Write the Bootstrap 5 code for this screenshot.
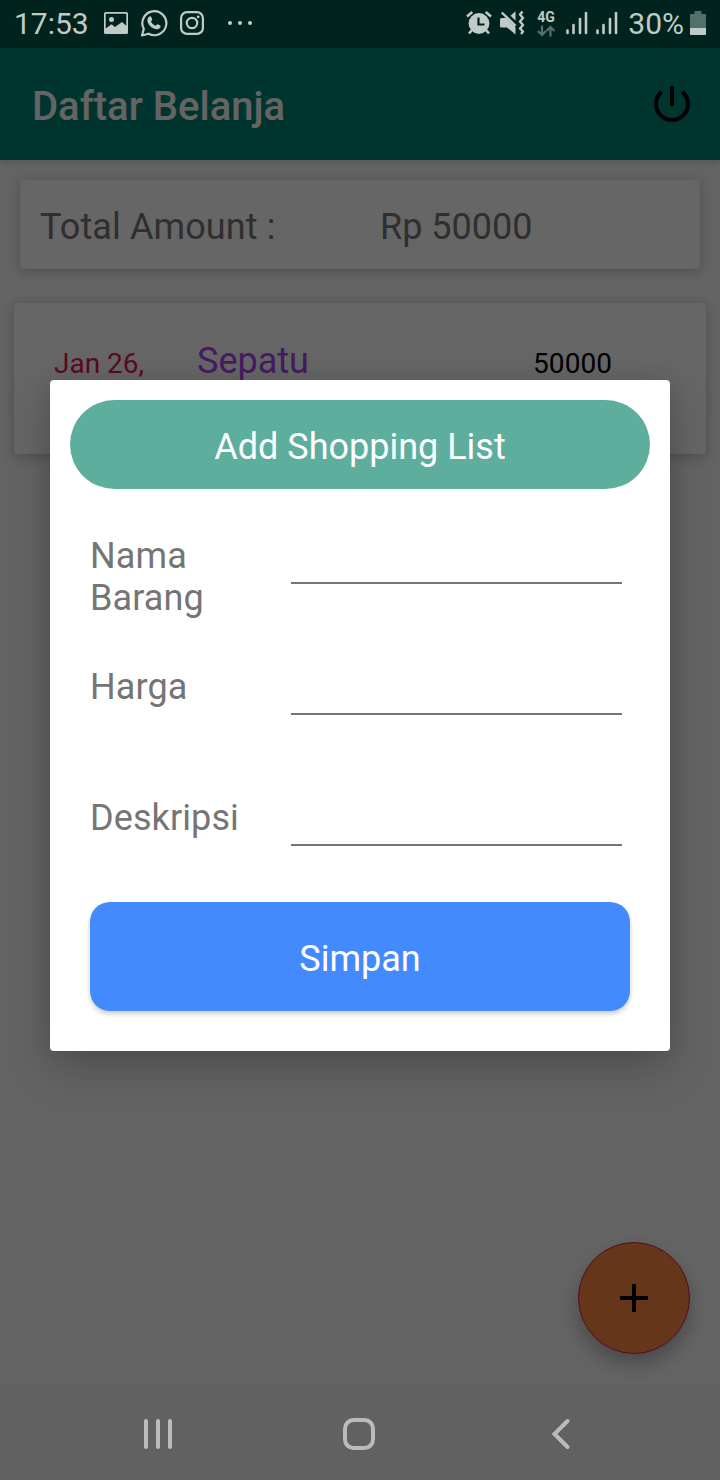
<!DOCTYPE html>
<html lang="id">
<head>
<meta charset="utf-8">
<meta name="viewport" content="width=device-width, initial-scale=1">
<title>Daftar Belanja</title>
<link href="https://cdn.jsdelivr.net/npm/bootstrap@5.3.0/dist/css/bootstrap.min.css" rel="stylesheet">
<style>
  body { font-family: Roboto, sans-serif; background: #fafafa; color: #757575; font-size: 36px; line-height: 42px; height: 1480px; overflow: hidden; }
  svg { display: block; flex: none; }
  .screen { width: 720px; height: 1480px; background: #fafafa; }
  .status-bar { height: 48px; background: #00231e; color: #c0cbc8; font-size: 30px; line-height: 48px; padding: 0 14px 2px; position: relative; z-index: 3; }
  .status-text { padding-top: 2px; height: 48px; line-height: 46px; }
  .network { width: 20px; height: 46px; padding-top: 9px; font-size: 14px; line-height: 16px; font-weight: 700; }
  .app-bar { height: 112px; background: #008577; padding: 4px 24px 0 32px; box-shadow: 0 2px 8px rgba(0,0,0,.16); position: relative; }
  .app-title { font-size: 40px; line-height: 48px; font-weight: 500; color: #fafafa; padding-top: 1px; }
  .content-area { padding: 20px 14px 0; }
  .paper { background: #fff; border: 0; border-radius: 4px; box-shadow: 0 2px 14px rgba(0,0,0,.25); }
  .total-card { height: 89px; margin: 0 6px; padding: 5px 20px 0; }
  .total-label { width: 340px; letter-spacing: .1px; }
  .entry-card { height: 151px; margin-top: 34px; padding: 37px 40px 0; }
  .entry-date { width: 143px; font-size: 28px; color: #e31a58; }
  .entry-name { width: 336px; color: #b048f4; }
  .entry-price { font-size: 28px; color: #000; letter-spacing: .1px; }
  .fab { width: 112px; height: 112px; right: 30px; bottom: 30px; background: #ff8744; border: 1px solid #d81b60; box-shadow: 0 10px 20px rgba(0,0,0,.28); }
  .scrim { inset: 0; background: rgba(0,0,0,.6); z-index: 1; }
  .dialog-box { left: 50px; top: 380px; width: 620px; height: 671px; padding: 20px; border-radius: 4px; background: #fff; z-index: 2; box-shadow: 0 18px 48px rgba(0,0,0,.22), 0 0 20px rgba(0,0,0,.08); }
  .dialog-heading { height: 89px; padding-top: 5px; background: #5eae9e; color: #fff; }
  .form-rows { padding: 46px 20px 0; }
  .form-line { height: 131px; }
  .form-line-label { width: 201px; padding-right: 40px; letter-spacing: .1px; }
  .line-input { width: 331px; height: 49px; border: 0; border-bottom: 2px solid #757575; background: transparent; outline: 0; padding: 0; }
  .save-btn { height: 109px; margin: -26px 20px 0; padding: 5px 0 0; border: 0; border-radius: 20px; background: #448aff; color: #fff; font-size: 36px; line-height: 42px; box-shadow: 0 3px 5px rgba(0,0,0,.2); }
  .nav-keys { height: 96px; background: #616161; position: relative; z-index: 3; padding: 4px 149px 0 142px; }
  .home-key { margin-right: 2px; }
</style>
</head>
<body>
<div class="screen d-flex flex-column position-relative">
  <header class="status-bar d-flex align-items-center">
    <span class="status-text">17:53</span>
    <svg style="margin-left:15px" width="24" height="22" viewBox="0 0 24 22"><path fill="#c0cbc8" fill-rule="evenodd" d="M1.500 0h21A1.500 1.500 0 0 1 24 1.500v19a1.500 1.500 0 0 1-1.500 1.500h-21A1.500 1.500 0 0 1 0 20.500v-19A1.500 1.500 0 0 1 1.500 0zM1.700 1.700v14.800l5.800-4.300 3.500 2.800 7-5 4.300 3.800V1.700z"/><circle cx="7.500" cy="7.500" r="2.500" fill="#c0cbc8"/></svg>
    <svg style="margin-left:12px" width="28" height="28" viewBox="0 0 28 28"><path fill="none" stroke="#c0cbc8" stroke-width="2.200" stroke-linejoin="round" d="M2 26.500l1.800-6.600A12 12 0 1 1 8.600 24.700z"/><path fill="#c0cbc8" d="M9.400 7.400c.6-.4 1.400-.4 1.700.3l1.100 2.600c.2.600-.9 1.700-1.200 2.200.9 2 2.500 3.400 4.500 4.300.6-.4 1.500-1.900 2.200-1.600l2.500 1.200c.8.400.3 2-.3 2.700-1.700 1.800-4.400 1.400-6.600.2-2.700-1.400-4.500-3.500-5.500-5.900-.9-2.200-.5-4.600 1.600-6z"/></svg>
    <svg style="margin-left:12px" width="24" height="24" viewBox="0 0 24 24" fill="none" stroke="#c0cbc8" stroke-width="2.200"><rect x="1.100" y="1.100" width="21.800" height="21.800" rx="6"/><circle cx="12" cy="12" r="5.200"/><circle cx="18.200" cy="5.800" r="1.400" fill="#c0cbc8" stroke="none"/></svg>
    <svg style="margin-left:24px" width="26" height="6" viewBox="0 0 26 6" fill="#c0cbc8"><circle cx="2" cy="3" r="2"/><circle cx="12" cy="3" r="2"/><circle cx="22" cy="3" r="2"/></svg>
    <div class="d-flex align-items-center ms-auto">
      <svg width="26" height="24" viewBox="0 0 26 24"><path fill="none" stroke="#c0cbc8" stroke-width="2.600" d="M1 5.500L6.300 1M25 5.500L19.700 1M6 19l-3 3.500M20 19l3 3.500"/><circle cx="13" cy="12.500" r="10.400" fill="#c0cbc8"/><path fill="none" stroke="#00231e" stroke-width="2.200" d="M12.500 6.500v7h6"/></svg>
      <svg style="margin-left:8px" width="25" height="24" viewBox="0 0 25 24"><path fill="#c0cbc8" d="M0 8.500q0-1.500 1.500-1.500H6L15.500 16V23.500L7 16.500H1.500Q0 16.500 0 15zM10.500 4.800L15.500.3V9.600z"/><path fill="none" stroke="#c0cbc8" stroke-width="2.400" d="M1.800 1.500L15.500 14.800"/><path fill="none" stroke="#c0cbc8" stroke-width="2.400" stroke-linejoin="round" d="M22.500.5l-2.500 3 3 3.500-3 3.500 3 3.500-3 3.500 3 3-2 2.500"/></svg>
      <div class="network" style="margin-left:12px">4G<svg width="18" height="12" viewBox="0 0 18 12" fill="none" stroke="#53706a" stroke-width="2.200"><path d="M5 .5V10M1 6l4 4 4-4M13.500 11.500V2M9.500 6l4-4 4 4"/></svg></div>
      <svg style="margin-left:9px" width="22" height="24" viewBox="0 0 22 24" stroke="#c0cbc8" stroke-width="2.600" stroke-linecap="round"><path d="M1.500 19.500v2.500M7.500 14v8M14 8v14M20 2v20"/></svg>
      <svg style="margin-left:8px" width="22" height="24" viewBox="0 0 22 24" stroke="#c0cbc8" stroke-width="2.600" stroke-linecap="round"><path d="M1.500 19.500v2.500M7.500 14v8M14 8v14M20 2v20"/></svg>
      <span class="status-text" style="margin-left:10px">30%</span>
      <svg style="margin-left:6px" width="16" height="24" viewBox="0 0 16 24"><path fill="#53706a" d="M4.500 0h7v3H15a1 1 0 0 1 1 1v13H0V4a1 1 0 0 1 1-1h3.500z"/><path fill="#c0cbc8" d="M0 17h16v6a1 1 0 0 1-1 1H1a1 1 0 0 1-1-1z"/></svg>
    </div>
  </header>

  <nav class="app-bar d-flex align-items-center justify-content-between">
    <span class="app-title">Daftar Belanja</span>
    <svg width="48" height="48" viewBox="0 0 24 24" style="margin-bottom:4px"><path d="M13 3h-2v10h2V3zm4.830 2.170l-1.420 1.420C17.990 7.860 19 9.810 19 12c0 3.870-3.130 7-7 7s-7-3.130-7-7c0-2.190 1.010-4.140 2.580-5.420L6.170 5.170C4.230 6.820 3 9.260 3 12c0 4.970 4.030 9 9 9s9-4.030 9-9c0-2.740-1.230-5.180-3.170-6.830z"/></svg>
  </nav>

  <main class="content-area flex-grow-1 position-relative">
    <div class="card paper total-card flex-row align-items-center">
      <span class="total-label">Total Amount :</span>
      <span>Rp 50000</span>
    </div>
    <div class="card paper entry-card flex-row align-items-baseline">
      <span class="entry-date">Jan 26,</span>
      <span class="entry-name">Sepatu</span>
      <span class="entry-price">50000</span>
    </div>
    <button class="fab btn rounded-circle position-absolute d-flex align-items-center justify-content-center p-0" type="button" aria-label="Tambah">
      <svg width="48" height="48" viewBox="0 0 24 24"><path d="M19 13h-6v6h-2v-6H5v-2h6V5h2v6h6v2z"/></svg>
    </button>
  </main>

  <footer class="nav-keys d-flex align-items-center justify-content-between">
    <svg width="32" height="34" viewBox="0 0 32 34" stroke="#bbb" stroke-width="4" stroke-linecap="round"><path d="M4 4v26M16 4v26M28 4v26"/></svg>
    <svg class="home-key" width="34" height="34" viewBox="0 0 34 34" fill="none" stroke="#bbb" stroke-width="4"><rect x="3" y="3" width="28" height="28" rx="8.500"/></svg>
    <svg width="26" height="34" viewBox="0 0 26 34" fill="none" stroke="#bbb" stroke-width="4" stroke-linecap="round"><path d="M22.500 4L9.500 17l13 13"/></svg>
  </footer>

  <div class="scrim position-absolute"></div>

  <section class="dialog-box position-absolute" role="dialog">
    <div class="dialog-heading rounded-pill d-flex align-items-center justify-content-center">Add Shopping List</div>
    <form class="form-rows">
      <div class="form-line d-flex align-items-start">
        <label class="form-line-label" for="nama">Nama Barang</label>
        <input class="line-input" id="nama" type="text">
      </div>
      <div class="form-line d-flex align-items-start">
        <label class="form-line-label" for="harga">Harga</label>
        <input class="line-input" id="harga" type="text">
      </div>
      <div class="form-line d-flex align-items-start">
        <label class="form-line-label pe-0" for="deskripsi">Deskripsi</label>
        <input class="line-input" id="deskripsi" type="text">
      </div>
    </form>
    <div class="d-grid"><button class="btn save-btn" type="button">Simpan</button></div>
  </section>
</div>
<script src="https://cdn.jsdelivr.net/npm/bootstrap@5.3.0/dist/js/bootstrap.bundle.min.js"></script>
</body>
</html>
